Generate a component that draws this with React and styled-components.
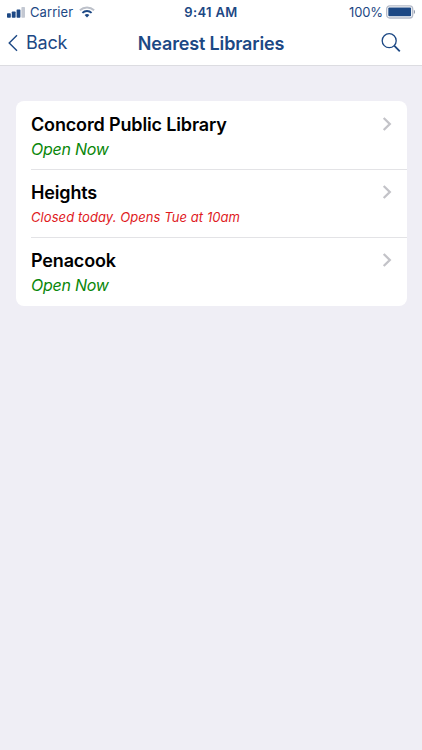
import styled, { createGlobalStyle } from "styled-components";

const GlobalStyle = createGlobalStyle`
  * {
    box-sizing: border-box;
  }
  body {
    margin: 0;
    background-color: #efeef5;
    font-family: Inter, "Liberation Sans", sans-serif;
  }
`;

const StyledScreen = styled.div`
  min-height: 100vh;
  background-color: #efeef5;
  color: #1c4884;
`;

const StyledHeader = styled.header`
  height: 66px;
  background-color: #fff;
  border-bottom: 1px solid #dcdce1;
`;

const StyledStatusBar = styled.div`
  display: grid;
  grid-template-columns: 1fr auto 1fr;
  align-items: center;
  height: 24px;
  padding: 0 7px;
  font-size: 13px;
  line-height: 16px;
`;

const StyledStatusGroup = styled.div`
  display: flex;
  align-items: center;
  justify-content: ${({ $end }) => ($end ? "flex-end" : "flex-start")};
`;

const StyledCarrier = styled.span`
  margin: 0 6px 0 5px;
  letter-spacing: 0.08px;
`;

const StyledTime = styled.span`
  font-weight: 600;
  letter-spacing: 0.35px;
`;

const StyledPercent = styled.span`
  margin-right: 3px;
  letter-spacing: -0.1px;
`;

const StyledNav = styled.nav`
  display: grid;
  grid-template-columns: 1fr auto 1fr;
  align-items: center;
  height: 38px;
  padding: 0 8px;
`;

const StyledBack = styled.a`
  display: flex;
  align-items: center;
  gap: 8px;
  font-size: 18px;
  line-height: 22px;
  letter-spacing: -0.25px;
`;

const StyledTitle = styled.h1`
  margin: 1px 0 0;
  font-size: 18px;
  line-height: 22px;
  font-weight: 600;
  letter-spacing: -0.15px;
`;

const StyledSearch = styled.a`
  display: flex;
  justify-content: flex-end;
  padding-right: 13px;
`;

const StyledList = styled.ul`
  list-style: none;
  margin: 35px 15.5px 0;
  padding: 0 0 0 15.5px;
  background-color: #fff;
  border-radius: 8px;
`;

const StyledRow = styled.li`
  display: flex;
  justify-content: space-between;
  height: 68px;
  padding: 12px 15px 0 0;

  & + & {
    padding-top: 11px;
    border-top: 1px solid #e3e3e6;
  }
  &:last-child {
    height: 69px;
  }
`;

const StyledName = styled.h2`
  margin: 0;
  color: #000;
  font-size: 18px;
  line-height: 24px;
  font-weight: 600;
  letter-spacing: -0.15px;
`;

const StyledHours = styled.p`
  margin: 0;
  color: ${({ $open }) => ($open ? "#0a870a" : "#e01b1e")};
  font-size: ${({ $open }) => ($open ? "16px" : "13px")};
  line-height: 24px;
  font-style: italic;
  letter-spacing: ${({ $open }) => ($open ? "-0.25px" : "0.07px")};
`;

const StyledChevron = styled.svg`
  margin-top: 4px;
`;

const libraries = [
  { name: "Concord Public Library", hours: "Open Now", open: true },
  { name: "Heights", hours: "Closed today. Opens Tue at 10am", open: false },
  { name: "Penacook", hours: "Open Now", open: true },
];

function SignalIcon() {
  return (
    <svg width="18" height="11" viewBox="0 0 18 11" fill="currentColor">
      <rect x="0" y="6.2" width="3.8" height="4.6" rx="0.7" />
      <rect x="4.8" y="4.6" width="3.8" height="6.2" rx="0.7" />
      <rect x="9.6" y="2.4" width="3.8" height="8.4" rx="0.7" />
      <rect x="14.4" y="0" width="3.6" height="10.8" rx="0.7" fill="#c3c8d2" />
    </svg>
  );
}

function WifiIcon() {
  return (
    <svg width="16" height="12" viewBox="0 0 16 12" fill="none" strokeWidth="1.9">
      <path d="M0.9 4.3a10.3 10.3 0 0 1 14.2 0" stroke="#bcc0c9" />
      <path d="M3.4 6.9a6.7 6.7 0 0 1 9.2 0" stroke="currentColor" />
      <path d="M8 11.5 5.6 9.1a3.6 3.6 0 0 1 4.8 0z" fill="currentColor" />
    </svg>
  );
}

function BatteryIcon() {
  return (
    <svg width="29" height="14" viewBox="0 0 29 14">
      <rect x="0.7" y="0.8" width="26" height="12.2" rx="3" fill="#fff" stroke="#b4bac8" strokeWidth="1.3" />
      <rect x="2.3" y="2.5" width="22.8" height="8.8" rx="1" fill="currentColor" />
      <path d="M27.8 4.8c1.6.5 1.6 3.7 0 4.2z" fill="#8f98ab" />
    </svg>
  );
}

function LibraryRow({ name, hours, open }) {
  return (
    <StyledRow>
      <div>
        <StyledName>{name}</StyledName>
        <StyledHours $open={open}>{hours}</StyledHours>
      </div>
      <StyledChevron width="10" height="14" viewBox="0 0 10 14" fill="none" stroke="#c3c3c8" strokeWidth="2.3">
        <path d="M1.7 1 7.8 7l-6.1 6" />
      </StyledChevron>
    </StyledRow>
  );
}

export default function App() {
  return (
    <StyledScreen>
      <GlobalStyle />
      <StyledHeader>
        <StyledStatusBar>
          <StyledStatusGroup>
            <SignalIcon />
            <StyledCarrier>Carrier</StyledCarrier>
            <WifiIcon />
          </StyledStatusGroup>
          <StyledTime>9:41 AM</StyledTime>
          <StyledStatusGroup $end>
            <StyledPercent>100%</StyledPercent>
            <BatteryIcon />
          </StyledStatusGroup>
        </StyledStatusBar>
        <StyledNav>
          <StyledBack>
            <svg width="10" height="18" viewBox="0 0 10 18" fill="none" stroke="currentColor" strokeWidth="1.4">
              <path d="M9 1.2 1.2 9 9 16.8" />
            </svg>
            Back
          </StyledBack>
          <StyledTitle>Nearest Libraries</StyledTitle>
          <StyledSearch>
            <svg width="20" height="20" viewBox="0 0 20 20" fill="none" stroke="currentColor">
              <circle cx="8.2" cy="7.7" r="7" strokeWidth="1.3" />
              <path d="m13.2 12.7 5.6 5.6" strokeWidth="1.8" />
            </svg>
          </StyledSearch>
        </StyledNav>
      </StyledHeader>
      <StyledList>
        {libraries.map((library) => (
          <LibraryRow key={library.name} {...library} />
        ))}
      </StyledList>
    </StyledScreen>
  );
}
